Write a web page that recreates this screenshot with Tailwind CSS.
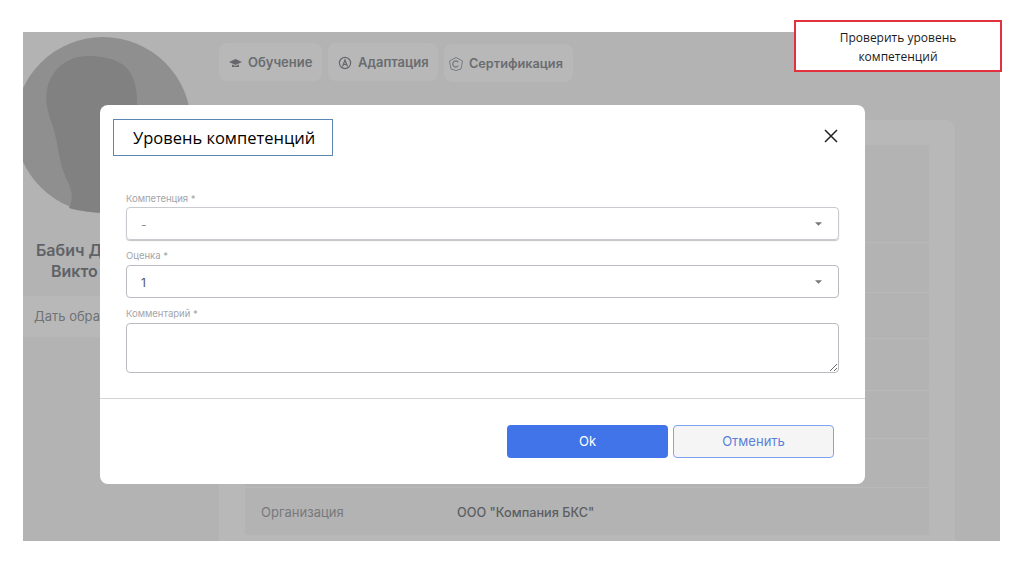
<!DOCTYPE html>
<html lang="ru">
<head>
  <meta charset="UTF-8">
  <meta name="viewport" content="width=device-width, initial-scale=1.0">
  <title>Уровень компетенций</title>
  <script src="https://cdn.jsdelivr.net/npm/@tailwindcss/browser@4"></script>
</head>
<body class="bg-white font-['Inter',sans-serif]">
  <div class="relative w-[1024px] h-[574px] overflow-hidden pt-[32px] pl-[23px]">

    <!-- page behind the overlay -->
    <div class="flex w-[977px] h-[509px] bg-[#b3b3b3] overflow-hidden">
      <aside class="w-[196px] shrink-0 pt-[5px]">
        <svg class="block" width="196" height="181" viewBox="23 37 196 181">
          <circle cx="103" cy="125" r="88" fill="#8f8f8f"/>
          <path d="M87 56C110 56 127 62 133 78C138 92 137 100 137 118L137 212C110 214 85 213 69 208C74 198 72 190 66 178C58 160 58 140 52 124C47 110 45 100 47 90C50 70 68 56 87 56Z" fill="#818181"/>
        </svg>
        <div class="mt-[22px] text-[16px] leading-[21px] font-semibold text-[#5f6266]">
          <div class="pl-[13px]">Бабич Д</div>
          <div class="pl-[28px]">Викто</div>
        </div>
        <div class="mt-[14px] h-[41px] pl-[11px] flex items-center bg-[#b8b8b8] text-[13px] text-[#707276]">Дать обрат</div>
      </aside>

      <main class="flex-1 pt-[11px]">
        <nav class="flex gap-[6px] text-[13px] font-semibold text-[#6a6c70]">
          <a class="w-[103px] h-[38px] pt-[1px] flex items-center gap-[6px] pl-[10px] rounded-lg bg-[#b8b8b8]">
            <svg width="13" height="10" viewBox="0 0 13 10" fill="#66686c"><path d="M6.500 1 13 4 6.500 7 0 4Z"/><path d="M3 6.500 6.500 8 10 6.500V9H3Z"/></svg>
            Обучение
          </a>
          <a class="w-[110px] h-[38px] pt-[1px] flex items-center gap-[6px] pl-[10px] rounded-lg bg-[#b8b8b8]">
            <svg width="14" height="14" viewBox="0 0 14 14" fill="none" stroke="#66686c" stroke-width="1.200"><circle cx="7" cy="7" r="5.600"/><path d="M4.500 10.500 7 4l2.500 6.500M5.300 8.300h3.400"/></svg>
            Адаптация
          </a>
          <a class="w-[129px] h-[38px] mt-[1px] pt-[1px] flex items-center gap-[5px] pl-[4px] rounded-lg bg-[#b8b8b8] text-[12.700px]">
            <svg width="16" height="16" viewBox="0 0 16 16" fill="none" stroke="#7a7c80" stroke-width="1"><path d="M8 1.500 14.500 5 13 13 8 14.500 3 13 1.500 5Z"/><path d="M10.300 6.300A3 3 0 1 0 10.300 9.700" stroke-width="1.400"/></svg>
            Сертификация
          </a>
        </nav>

        <section class="mt-[38px] w-[736px] h-[421px] pt-[25px] pl-[26px] rounded-t-lg bg-[#b8b8b8]">
          <div class="w-[684px] bg-[#b3b3b3] text-[13px]">
            <div class="h-[98px] border-b border-[#b9b9b9]"></div>
            <div class="h-[50px] border-b border-[#b9b9b9]"></div>
            <div class="h-[46px] border-b border-[#b9b9b9]"></div>
            <div class="h-[52px] border-b border-[#b9b9b9]"></div>
            <div class="h-[48px] border-b border-[#b9b9b9]"></div>
            <div class="h-[49px] border-b border-[#b9b9b9]"></div>
            <div class="h-[47px] flex items-center pl-[16px] pt-[3px]">
              <span class="w-[196px] text-[#77797d]">Организация</span>
              <span class="font-medium text-[12.700px] text-[#5c5e62]">ООО "Компания БКС"</span>
            </div>
          </div>
        </section>
      </main>
    </div>

    <!-- modal -->
    <div class="absolute left-[100px] top-[105px] w-[765px] h-[379px] bg-white rounded-lg">
      <header class="flex items-start justify-between pt-[14px] pl-[13px] pr-[26px]">
        <div class="w-[220px] h-[37px] pt-[1px] flex items-center pl-[19px] border-[1.500px] border-[#5b86b3] font-['Open_Sans',sans-serif] text-[16.500px] text-black">Уровень компетенций</div>
        <button class="mt-[10px] mr-[1px]">
          <svg class="block" width="14" height="14" viewBox="0 0 14 14" stroke="#222" stroke-width="1.500"><path d="M1 1 13 13M13 1 1 13"/></svg>
        </button>
      </header>

      <form class="mt-[37px] px-[26px] w-[765px]">
        <label class="block h-[14px] text-[9.500px] leading-[12px] text-[#a3a5aa]">Компетенция *</label>
        <div class="h-[33px] flex items-center justify-between pl-[14px] pr-[16px] rounded border border-[#c9cad0] shadow-[0_1px_1px_#c4c4c4] text-[12px] text-[#8d8f94]">
          <span class="pt-[2px]">-</span>
          <svg width="7" height="4" viewBox="0 0 8 4" fill="#777"><path d="M0 0H8L4 4Z"/></svg>
        </div>
        <label class="block mt-[10px] h-[15px] text-[9.500px] leading-[12px] text-[#a3a5aa]">Оценка *</label>
        <div class="h-[33px] flex items-center justify-between pl-[14px] pr-[16px] rounded border border-[#b9bbc1] text-[12px] text-[#55575c]">
          <span class="pt-[2px]">1</span>
          <svg width="7" height="4" viewBox="0 0 8 4" fill="#777"><path d="M0 0H8L4 4Z"/></svg>
        </div>
        <label class="block mt-[10px] h-[15px] text-[9.500px] leading-[12px] text-[#a3a5aa]">Комментарий *</label>
        <textarea class="block w-[713px] h-[50px] rounded border border-[#b9bbc1] resize-y"></textarea>
      </form>

      <div class="mt-[25px] border-t border-[#d4d4d4]"></div>

      <footer class="mt-[26px] pr-[31px] flex justify-end gap-[5px] text-[13px]">
        <button class="w-[161px] h-[33px] rounded bg-[#4174e8] text-white">Ok</button>
        <button class="w-[161px] h-[33px] rounded border border-[#7fa3ee] bg-[#f5f5f6] text-[#5b7fd8]">Отменить</button>
      </footer>
    </div>

    <!-- annotation -->
    <div class="absolute left-[794px] top-[20px] w-[208px] h-[52px] pt-[2px] flex items-center justify-center text-center bg-white border-2 border-[#e0313c] font-['Open_Sans',sans-serif] text-[12px] leading-[19px] text-[#1a1a1a]">Проверить уровень<br>компетенций</div>
  </div>
</body>
</html>
